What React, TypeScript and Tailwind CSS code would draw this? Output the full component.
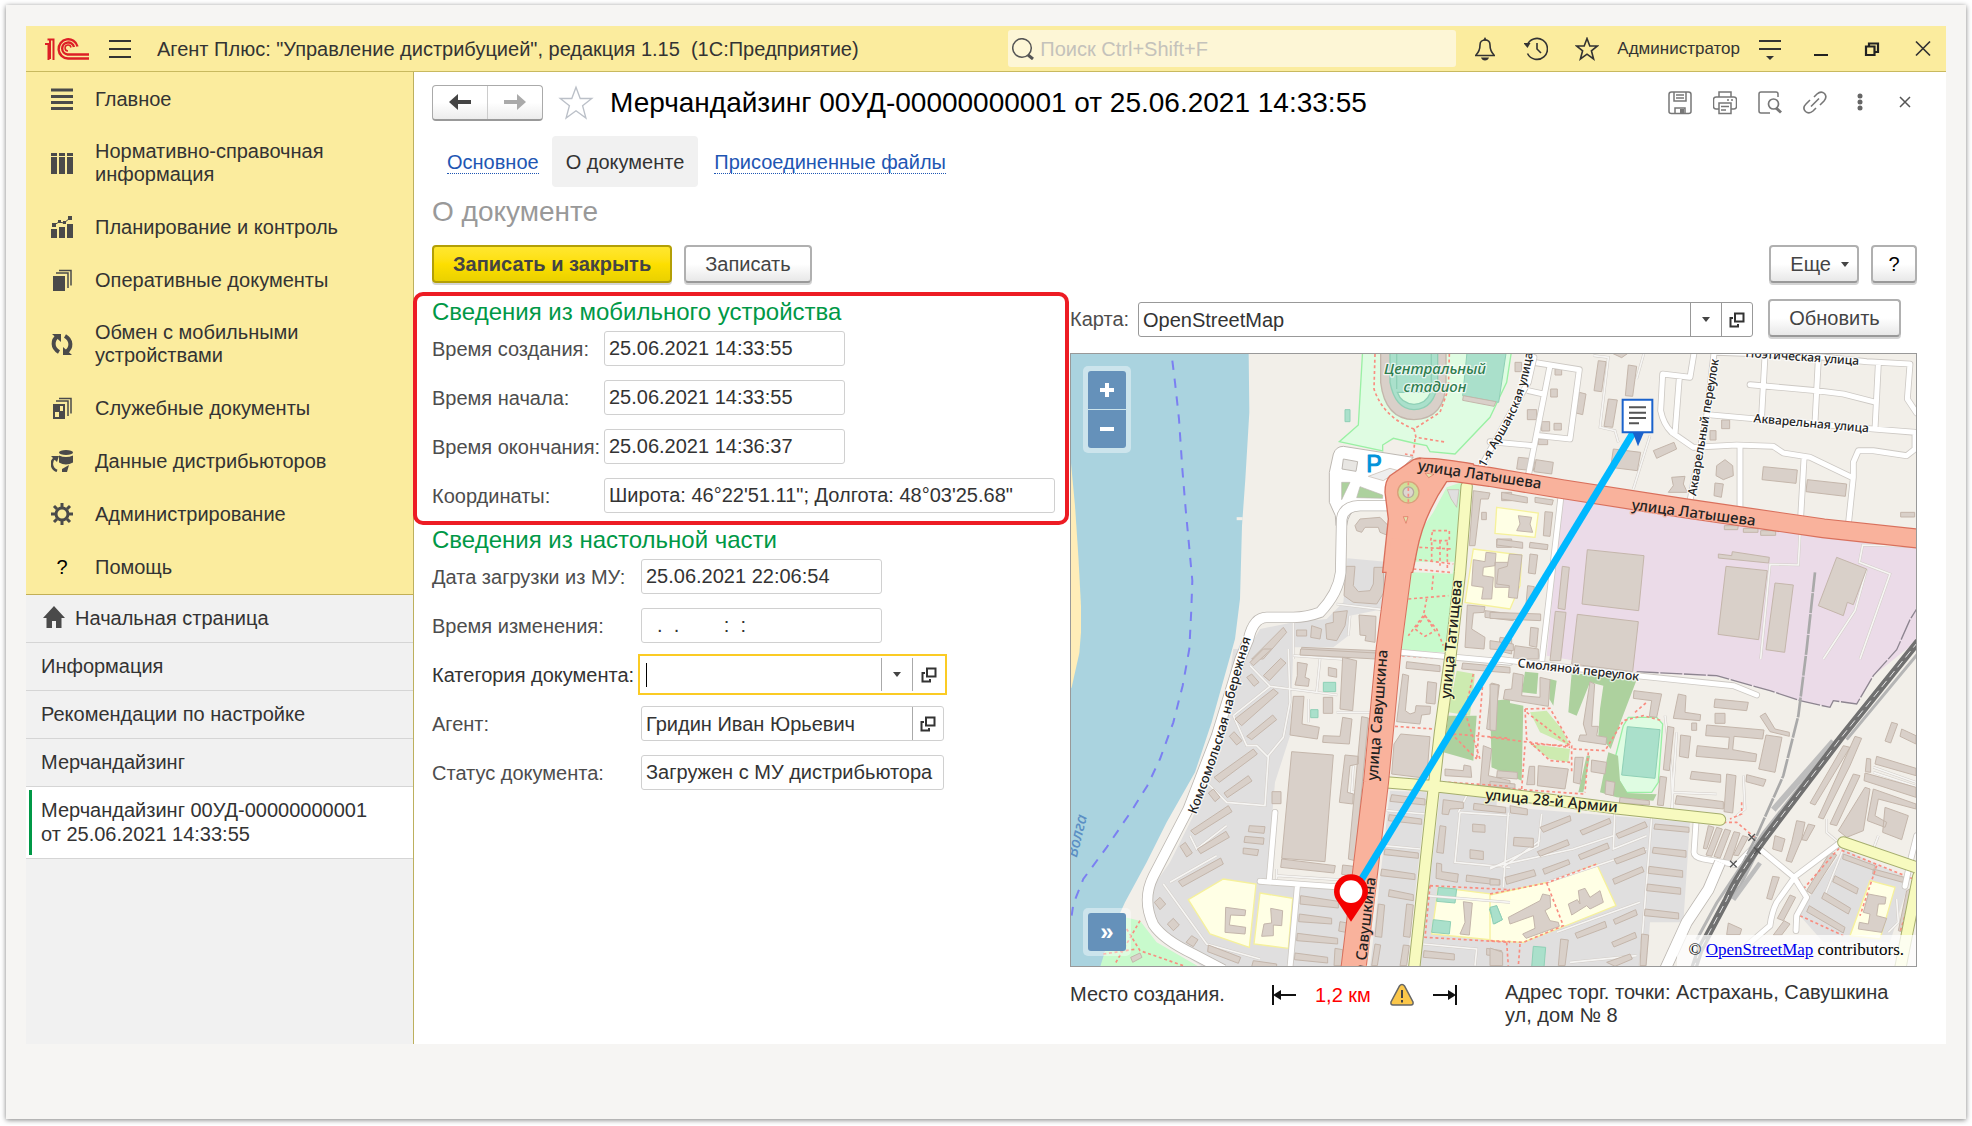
import React from 'react';

type IconProps = { children: React.ReactNode; className?: string; box?: string };

const Icon: React.FC<IconProps> = ({ children, className = 'w-6 h-6', box = '0 0 24 24' }) => (
  <svg viewBox={box} className={`shrink-0 ${className}`} fill="none" aria-hidden="true">
    {children}
  </svg>
);

const STAR = 'M12 1.5L14.8 9H22.5L16.4 13.8L18.6 22L12 17.2L5.4 22L7.6 13.8L1.5 9H9.2Z';

const SECTIONS = [
  {
    label: 'Главное',
    icon: <path d="M0 2h22M0 8.500h22M0 14.500h22M0 20.500h22" stroke="#4a4a4a" strokeWidth="3" />,
  },
  {
    label: 'Нормативно-справочная информация',
    icon: <path d="M0 1h6v3H0zM8 1h6v3H8zM16 1h6v3h-6zM0 5h6v17H0zM8 5h6v17H8zM16 5h6v17h-6z" fill="#4a4a4a" />,
  },
  {
    label: 'Планирование и контроль',
    icon: (
      <>
        <path d="M0 13h6v9H0zM8 11h6v11H8zM16 8h6v14h-6z" fill="#4a4a4a" />
        <path d="M3 9l5-3 5 1 6-5" stroke="#4a4a4a" />
        <path d="M1 7h4v4H1zM7 4h3v3H7zM12 5h3v3h-3zM17 0h4v4h-4z" fill="#4a4a4a" />
      </>
    ),
  },
  {
    label: 'Оперативные документы',
    icon: (
      <>
        <path d="M2 7h12v15H2z" fill="#4a4a4a" />
        <path d="M5 4h12v15M8 1.500h12v15" stroke="#4a4a4a" strokeWidth="1.500" />
      </>
    ),
  },
  {
    label: 'Обмен с мобильными устройствами',
    icon: (
      <>
        <path d="M7 3C1 7 1 15 8 19M14 3c7 4 7 12 1 16" stroke="#4a4a4a" strokeWidth="4" />
        <path d="M1 1h9v8zM21 22h-9v-8z" fill="#4a4a4a" />
      </>
    ),
  },
  {
    label: 'Служебные документы',
    icon: (
      <>
        <path d="M2 7h12v15H2z" fill="#4a4a4a" />
        <path d="M4 15h4v5H4zM9 9h3v5H9z" fill="#fbec9e" />
        <path d="M5 4h12v15M8 1.500h12v15" stroke="#4a4a4a" strokeWidth="1.500" />
      </>
    ),
  },
  {
    label: 'Данные дистрибьюторов',
    icon: (
      <>
        <ellipse cx="15" cy="2.500" rx="7" ry="2.500" fill="#4a4a4a" />
        <path d="M8 5.500q7 3 14 0v7q-7 4-14 0z" fill="#4a4a4a" />
        <path d="M6 21C-1 18 0 10 4 8" stroke="#4a4a4a" strokeWidth="2.500" />
        <path d="M0 6h8l-2 6zM11 22h5l2-7-7 4z" fill="#4a4a4a" />
      </>
    ),
  },
  {
    label: 'Администрирование',
    icon: (
      <>
        <circle cx="11" cy="11" r="6" stroke="#4a4a4a" strokeWidth="3" />
        <path
          d="M11 0v4M11 18v4M0 11h4M18 11h4M3 3l3 3M16 16l3 3M19 3l-3 3M6 16l-3 3"
          stroke="#4a4a4a"
          strokeWidth="3"
        />
      </>
    ),
  },
  { label: 'Помощь', icon: null },
];

const WINDOWS = ['Информация', 'Рекомендации по настройке', 'Мерчандайзинг'];

const DEVICE_FIELDS = [
  { id: 'created', label: 'Время создания:', value: '25.06.2021 14:33:55', width: 'w-[241px]' },
  { id: 'started', label: 'Время начала:', value: '25.06.2021 14:33:55', width: 'w-[241px]' },
  { id: 'finished', label: 'Время окончания:', value: '25.06.2021 14:36:37', width: 'w-[241px]' },
  { id: 'coords', label: 'Координаты:', value: 'Широта: 46°22\'51.11"; Долгота: 48°03\'25.68"', width: 'w-[451px]' },
];

const FIELD = 'h-[35px] rounded-[3px] border border-[#d0d0d0] bg-white px-1 text-[20px] text-[#333]';
const BUTTON =
  'h-[38px] rounded-[4px] border-2 border-[#b0b0b0] border-b-[#999] bg-linear-to-b from-white from-50% to-[#e8e8e8] text-[20px] text-[#444] shadow-[0_2px_0_#d4d4d4]';

const OpenIcon = () => (
  <Icon className="w-4 h-4" box="0 0 16 16">
    <path d="M6 1.500h8.500v8H6zM4 6H1.500v8.500H9V12" stroke="#333" strokeWidth="2" />
  </Icon>
);

const ArrowDown = () => (
  <Icon className="w-2 h-[5px]" box="0 0 8 5">
    <path d="M0 0h8L4 5z" fill="#444" />
  </Icon>
);

/* ---------- map ---------- */

// The drawing is split in four sheets, each with its own origin.
const NW = 'translate(-30 -42)';
const NE = 'translate(1260 -42)';
const SW = 'translate(-30 888)';
const SE = 'translate(1260 888)';

const HOUSES = [
  {
    at: NW,
    d: 'M885 560L900 540L960 535L985 560L980 588L960 580L955 565L915 565L905 580L890 575ZM858 682L885 682L880 740L895 758L930 755L940 735L942 685L970 685L972 760L950 795L880 790L852 770ZM575 960L670 865L680 880L610 960ZM710 873h30v18h-30ZM755 860L785 870L780 900L752 895ZM820 820L862 815L855 860L830 905L800 900L797 855L820 850ZM897 828L948 832L945 910L915 905L918 890L900 888ZM725 925L950 935V955L725 945ZM1240 455L1290 462L1285 480L1262 480L1245 620L1228 620ZM1265 520h14v22h-14ZM1325 460h30v25h-30ZM1240 662L1275 668L1278 640L1308 643L1305 680L1270 685L1268 710L1300 715L1295 780L1265 780L1270 745L1235 740ZM1310 600h45v25h-45ZM1305 670h50v75h-50ZM1222 798L1275 803L1272 820L1240 822L1235 870L1275 895L1272 930L1215 925ZM1275 815L1360 825V845L1275 835ZM1320 895L1355 900V945L1315 935ZM1210 170L1308 188L1302 202L1208 184Z',
  },
  {
    at: NE,
    d: 'M75 70h20v28h-20ZM195 90h20v18h-20ZM182 150h20v24h-20ZM112 212h28v30h-28ZM155 248h24v28h-24ZM192 253h22v20h-22ZM145 300h28v17h-28ZM268 160L288 165L278 227L258 222ZM325 65L348 68L335 158L312 155ZM415 78L440 82L428 172L406 170ZM355 180L382 183L368 265L342 262ZM365 42h50l-20 14ZM370 330L452 340L442 395L362 385ZM490 335L552 310L560 330L500 358ZM85 355L135 360L130 395L80 390ZM138 362L190 370L185 405L132 398ZM545 415L585 412L580 435L592 460L535 460L550 440ZM680 380L705 362L728 380L730 410L700 422L678 410ZM675 432L700 435L694 475L672 470ZM695 243h24v26h-24ZM660 275h18v28h-18ZM820 383L922 393L918 433L816 422ZM952 422L1070 435L1066 472L948 458ZM1232 520h42v14h-42ZM35 460L112 475V492L35 480ZM135 475L190 483L186 498L135 490ZM165 518L188 520L180 592L160 590ZM22 600L98 610V628L20 618ZM120 610L174 617L172 632L118 626ZM120 645L143 648L136 705L115 702ZM113 740L133 743L125 798L108 795ZM85 530L125 535L120 555L128 580L80 575L90 555ZM25 690L52 682L58 645L96 648L82 778L55 775L58 740L20 735ZM0 820L152 825V845L0 838ZM122 865L145 868L140 925L118 920ZM75 920L145 930V960H70ZM0 905L70 915V935L0 930ZM292 632L462 650L446 815L276 795ZM262 826L445 848L428 998L245 975ZM708 682L832 695L806 902L684 886ZM855 732L910 738L884 940L828 932ZM1040 655L1130 690L1090 797L1072 790L1060 830L985 800ZM217 682L238 685L225 812L204 808ZM196 817L228 820L212 965H180ZM685 645L725 650L727 638L838 655L836 672L685 657ZM703 560h42l-2 12h-40ZM760 568h44v12h-44ZM812 575h45v14h-45Z',
  },
  {
    at: SW,
    d: 'M570 40L610 0L635 0L580 50ZM610 80L662 28L678 42L628 95ZM560 85L575 75L597 100L582 112ZM525 210L640 120L655 132L545 230ZM560 262L638 198L650 212L575 272ZM508 262L522 248L546 275L530 288ZM462 385L580 300L592 315L478 400ZM492 432L565 380L576 396L502 446ZM445 432L460 420L480 445L465 458ZM392 545L505 470L516 488L405 558ZM412 600L498 547L508 565L422 614ZM360 592L376 580L397 612L380 624ZM355 697L482 627L490 645L367 713ZM568 530L615 533L612 553L565 548ZM555 562L612 567L610 586L552 580ZM550 597L596 602L592 620L549 614ZM636 428h27v36h-27ZM695 308L820 318L795 638L665 628ZM665 630L826 650L822 672L662 655ZM712 40L742 45L735 85L748 90L745 112L705 108L712 80ZM805 55l25 5v25l-25 -5ZM848 25L890 35L878 185L840 180ZM700 142L732 142L726 225L778 235L772 270L690 258ZM790 145h28v48h-28ZM848 205L876 210L868 285L788 280L790 260L840 262ZM722 0L950 12V30L720 18ZM855 318L895 322V345L870 350L862 430L880 435L878 465L838 460ZM905 203L925 207L885 635L865 630ZM848 648L882 652L878 680L845 676ZM1040 38L1140 50V68L1038 58ZM1028 75L1046 80L1036 185L1050 195L1065 190L1068 170L1112 172L1110 195L1085 198L1080 225L1010 218ZM1103 98L1130 102L1125 165L1098 162ZM1022 255L1110 263L1100 388L995 375L1002 285ZM1295 102L1318 108L1300 245L1280 240ZM1155 360L1210 365L1212 348L1232 352L1235 385L1155 380ZM1270 290L1295 300L1285 380L1350 395V420L1260 410ZM1208 42L1350 55V72L1205 60ZM995 437L1095 450V468L990 457ZM988 497L1085 510V526L985 515ZM975 600L1075 612V628L972 617ZM965 660L1065 675V692L962 680ZM988 722L1060 737V755L985 742ZM955 765L974 768L965 865L945 862ZM1040 765L1060 768L1050 865L1030 862ZM945 885L962 888L952 950H935ZM1030 888L1048 890L1040 950H1020ZM1150 452L1210 460V478L1170 480L1165 497L1146 495ZM1140 530L1158 533L1150 613L1130 610ZM1130 642L1145 645L1145 668L1195 675L1192 700L1128 688ZM1242 463L1337 475V492L1240 482ZM1238 525L1275 528V550L1238 548ZM1230 602L1270 607V632L1230 628ZM1220 678L1320 692V708L1218 697ZM722 740L835 757V777L720 765ZM718 795L815 808V825L716 818ZM712 853L833 868V885L710 875ZM705 912L803 925V942L703 932ZM840 818L862 822L858 850L836 846ZM825 898L848 902V950H822ZM497 775L557 783L555 800L512 798L508 828L557 835L555 855L495 850ZM632 778L668 785L665 830L640 828L640 860L605 862L612 825L635 822ZM283 760L300 745L317 765L300 782ZM322 825L340 808L358 828L340 845ZM378 880L395 860L414 872L400 893ZM445 888L542 925L535 943L443 908ZM580 935l70 10v8h-75ZM212 925L240 912L246 925L218 940ZM1210 758L1237 762L1228 858L1200 855L1215 820ZM1092 905L1183 915V933L1090 925ZM1280 898L1325 905V950H1305L1300 920L1280 918Z',
  },
  {
    at: SE,
    d: 'M70 72L100 78L95 140L150 145L150 85L180 92L175 172L40 150L45 122L65 120ZM0 105L25 108L18 245L0 243ZM300 98L314 105L305 232L325 232L320 260L350 265L348 287L265 275L270 258L290 258L280 225ZM432 125L515 135L500 205L478 202L485 155L430 148ZM565 135L588 140L585 190L632 197L630 215L550 208ZM605 222h15v22h-15ZM675 150L775 160L770 185L672 175ZM675 193h30v30h-30ZM810 202L826 192L855 240L898 250V262L840 248ZM650 228L822 243L818 270L732 262L728 302L800 315L797 338L618 322L622 290L715 300L718 265L647 260ZM572 258L602 262L595 327L568 322ZM828 258L876 265L855 370L806 360ZM605 367L692 377V400L600 390ZM770 377L828 392L820 412L768 398ZM710 375L738 380L728 492L702 488ZM560 440L700 458V480L555 465ZM533 232L552 236L538 365L520 362ZM510 382L530 385L520 470L502 468ZM145 350L235 360L225 420L142 410ZM305 333L350 340L345 375L303 368ZM255 325L280 325L270 405L250 400ZM118 352h16v55h-24ZM348 395L375 400L370 440L345 435ZM22 365L82 370V390L20 385ZM390 445L478 455V468L388 462ZM0 397L75 405V418L0 412ZM150 535L240 500L243 515L160 550ZM270 545L358 508L363 522L278 558ZM378 555L465 518L472 534L386 568ZM72 565L130 568V595L70 590ZM142 608L232 572L238 588L150 622ZM265 618L352 582L358 598L272 632ZM372 630L462 595L467 612L380 645ZM45 685L132 662L138 680L50 706ZM158 660L235 632L240 645L164 676ZM368 690L456 653L462 668L374 706ZM60 470L112 480V498L62 492ZM495 525L597 535V550L492 540ZM490 595L588 605V625L487 612ZM477 652L578 665V685L475 673ZM472 705L572 717V736L470 725ZM465 780L566 792V810L463 800ZM255 853L345 817L350 835L262 868ZM370 812L437 782L442 798L376 826ZM365 880L435 850L440 866L372 894ZM350 940L420 915L427 930L375 952ZM212 870L235 873L225 950H205ZM455 855L476 858L468 950H450ZM0 690L28 692V708H0ZM0 897L38 910V950H0ZM55 805L150 755L158 735L180 740L182 775L165 785L180 815L205 820L208 832L108 868L98 855L135 838L130 800L60 825ZM235 765L262 752L270 765L265 725L285 718L300 745L330 725L340 760L300 780L290 770L245 798ZM655 530L672 535L650 600L640 598ZM680 535L697 540L665 622L648 618ZM705 540L722 545L690 628L672 622ZM732 548L750 552L722 638L700 632ZM758 560L775 565L745 620L730 618ZM1095 262L1115 268L1080 350L1000 510L985 505ZM1060 290L1080 295L975 468L960 462ZM1090 375L1110 380L1040 530L1020 525ZM1125 415L1140 420L1120 545L1070 565L1045 545ZM1160 322L1278 358V380L1155 345ZM1125 372L1278 415V445L1122 395ZM1150 420L1278 465V480L1165 450L1155 500L1190 520L1185 535L1132 515ZM1185 475L1255 500L1235 572L1178 550ZM1205 220L1223 225L1202 282L1185 276ZM1235 240L1278 260V285L1230 262ZM920 515L945 520L935 570L905 640L888 635L905 580ZM955 525L975 530L950 575L935 572ZM855 560L885 570L875 608L848 600ZM1020 610L1040 618L965 735L950 725ZM1060 615L1155 650V665L1058 630ZM1150 660L1243 685L1238 700L1148 675ZM1035 680L1105 718L1100 735L1028 698ZM1003 730L1082 778L1075 795L995 748ZM958 770L1065 835L1060 852L950 788ZM900 738L917 745L880 815L862 808ZM848 682L868 685L845 752L830 748ZM882 815L900 825L875 858H850ZM715 822L755 840L750 857H710ZM1135 735L1188 745L1185 765L1165 765L1160 800L1190 808L1175 850L1105 840L1108 820L1135 825L1140 795L1120 790ZM1250 725L1278 710V760L1240 850L1225 845ZM1130 328l12 2v40l-16 -2Z',
  },
];

const LANES = [
  { at: NE, d: 'M115 410L180 80M130 70L268 92L240 300L148 290M0 308L130 320M115 155L160 165M612 42L600 115L518 105L512 215Q520 255 545 280L610 325L740 318L850 322L880 342L960 355L1085 415M568 115L555 285M672 42L650 230L600 485M750 320V508M942 360L932 535M1076 548L1090 415V370L1105 335L1150 335L1250 350L1275 330V280M680 40L960 50L1130 68L1260 75L1252 180L1280 222M825 50L815 230M985 60L975 250M1165 75L1155 270M780 137L980 155L1060 165L1150 188M665 228L800 240L1150 270L1275 280' },
  { at: NE, d: 'M212 480L155 970' },
  { at: NW, d: 'M1262 385L1350 225L1405 130L1422 55' },
  { at: SW, d: 'M1022 10L1350 40M645 490L628 690M600 697L850 715M712 712L690 955' },
  { at: SE, d: 'M20 30L440 80L730 110L800 138M618 520L612 610Q612 625 640 630L740 647L800 585M800 592L912 685L1045 585M912 685L950 745L920 800L918 845M910 690L860 760Q845 790 840 830L770 890M1280 560L1260 640L1245 712' },
];

const TRACKS = [
  { at: NE, d: 'M310 50L355 55L330 265L375 275L385 310M462 42L440 120M480 290L430 450M930 585L925 678L840 676L812 960M1278 622L1118 618L1108 670L1200 705L1110 960M1130 690L1095 815L1000 960' },
  { at: NW, d: 'M830 795L970 812M870 830L865 890M700 850V960M590 960L670 870' },
  { at: SW, d: 'M570 50L630 112L832 138M700 20L870 32M685 0L690 160L670 265L625 320L615 470L500 460L440 400M520 200L560 290L590 290L625 325M630 112L520 200M780 30L770 130M745 150V220M830 190L940 190M390 560L410 600L500 530M310 705L440 885L600 930M330 700L470 620M650 680L880 695M1200 490L1350 500M1200 490L1185 640L1350 655M1220 440L1195 490M1100 740L1350 760M1090 885L1250 900L1245 950M970 590L1080 600M980 485L1095 495M650 660V690M880 350L875 430L910 425' },
  { at: SE, d: 'M55 490L40 715M155 495L145 590L0 660M375 475L370 600L470 560M485 505L450 950M0 655L250 600L370 560M170 700L470 600M200 850L450 760M240 940L440 920M525 200L545 370L548 480M560 250L545 480M550 430L680 435M760 380L765 480L740 500M150 575L38 655M1010 510V550L1045 580M1060 600L1000 750M1165 560L1150 600M1150 355L1278 400M1150 370L1278 412M1195 850L1225 820L1220 750' },
];

const PATHS = [
  { at: NW, d: 'M945 45L942 150Q970 235 1062 270L1140 220L1165 150L1168 45M1062 270L1068 295L1160 310M1065 300L1060 350L1035 345M1118 575H1168V605H1112ZM1078 625L1178 630M1060 660L1180 675M1060 690L1170 700M1120 710L1115 760M1045 780L1165 770M1100 780L1090 830L1045 890M1095 830L1130 870L1150 920M1095 830L1065 870L1095 892L1125 875ZM1115 610V670M1140 605V680M1162 610V690M920 408L985 382' },
  { at: SW, d: 'M1025 20L1150 28M1005 232L1120 240M1165 400L1350 412M1240 75L1215 190L1260 330M1270 80L1250 330M1180 255L1350 268M1200 185L1180 260L1250 330M1110 710L1350 722M1110 710L1095 865L1350 880M200 840L240 905L370 950M240 815L165 945M130 915L230 900' },
  { at: SE, d: 'M0 265L240 295M105 180L180 178L245 290V370M105 180L110 270L180 335L240 340M110 190L240 290L120 285M95 420L105 290M250 300L345 305L400 215L460 200L515 215M295 310L285 430M435 190L470 160M0 415L280 435M700 520L740 520L800 570M800 590L880 660M755 460V495L720 510M0 735L170 702L320 645M170 702L220 830L100 880L0 875M90 885L85 950M50 880L55 950M925 690L940 720L1045 600L1270 690M930 800L1060 860M1160 650L1110 800M1278 690L1230 850' },
];

const EMBANKMENT =
  'M955 458H870Q820 460 815 498L812 658Q805 720 750 778Q710 793 670 793H590Q550 793 535 860L510 920L440 1148L355 1368L250 1570Q215 1640 250 1715Q280 1760 370 1803L460 1850';
const LATYSHEVA = 'M1050 343L1260 372L1475 408L1840 465L2260 526L2545 557';
const SAVUSHKINA = 'M1000 560L986 658L956 888L918 1288L850 1850';
const TATISCHEVA = 'M1190 400L1170 658L1142 905L1110 1138L1082 1388L1055 1638L1032 1850';
const ARMII = 'M950 1288L1100 1300L1310 1324L1640 1366L1950 1400';
const RAILWAY = 'M2545 865L2310 1158L2090 1448Q2000 1570 1970 1640L1890 1790L1870 1850';

const TownMap = () => (
  <svg viewBox="3 3 2535 1836" preserveAspectRatio="xMidYMid slice" className="block w-full h-full" role="img" aria-label="Карта">
    <defs>
      <path id="embankment" d="M378 1385Q455 1190 492 1038Q520 930 550 830" />
      <path id="arshanskaya" d="M1245 345L1325 205Q1370 120 1388 0" />
    </defs>
    <path d="M0 0H2545V1845H0Z" fill="#f2efe9" />
    <path d="M0 0H536L538 178L526 378L516 518L510 738L495 858L425 1108L375 1258L290 1408L230 1528L165 1648L110 1768L95 1845H0Z" fill="#aad3df" />
    <path d="M0 298L15 458L25 608L33 758V838L28 900L5 1003L0 1010Z" fill="#ffedb8" />
    <path d="M500 497h18" stroke="#f2efe9" strokeWidth="9" />
    <path
      d="M307 23L315 88L327 198L337 348L347 468L360 608L367 683L364 768L358 888L338 998L310 1108L270 1218L232 1298L185 1373L110 1483L40 1578L10 1653L5 1688"
      fill="none"
      stroke="#7b7ff2"
      strokeWidth="6"
      strokeDasharray="28 26"
    />

    {/* blocks */}
    <g fill="#e0dfdf">
      <path transform={NW} d="M540 970L600 870L700 850L800 840L850 790L862 658L978 668L970 810L870 830L865 890L820 925L700 925L695 970Z" />
      <path transform={SW} d="M520 0L700 0L690 260L645 400L620 690L885 718L860 955H430L300 870L260 740L330 640L400 500L480 300ZM990 425L1100 430L1040 955H930ZM1140 430L1310 445L1310 955H1080Z" />
      <path transform={SE} d="M0 470L600 520L580 820L480 820L470 955H0ZM1060 600L1260 690L1200 880H1000L930 800L960 740Z" />
    </g>
    <path d="M1477 430L2545 575V860L2410 968L2360 1053L2290 1043L2280 1063L2190 1043L2100 1013L1960 973L1700 956L1430 908Z" fill="#ebdbe8" />
    <path d="M1700 956L1940 968L2100 1013L2190 1043L2280 1063L2290 1043L2360 1053L2410 968L2480 890L2520 800L2545 760" fill="none" stroke="#8d8590" strokeWidth="4" strokeDasharray="66 5" />
    <g fill="#c8facc">
      <path transform={NW} d="M1120 520L1160 445L1205 430L1190 700L1155 940L1025 935L1065 600Z" />
      <path transform={SW} d="M1030 0L1150 0L1148 10L1030 0ZM195 805L240 815L290 880L420 955H120L150 860Z" />
    </g>
    <path transform={NW} d="M1060 668H1182L1178 704L1058 700Z" fill="#f2efe9" />
    <g fill="#dffce2" stroke="#9af0a4" strokeWidth="4">
      <path d="M878 -9L865 216L808 266L938 294V276L970 256L1030 270L1070 278L1080 296L1155 303L1260 193L1310 88L1325 -9Z" />
      <path transform={SE} d="M415 205H500L518 225L505 400L485 430H410L385 390L372 340L400 230Z" />
    </g>
    <g fill="#add19e">
      <path transform={SE} d="M0 150L100 170L95 395L5 355ZM105 68L145 72L140 135L95 130ZM245 72L440 92L395 210L362 300L350 285L325 260L330 180L340 110L300 100L260 200L235 190ZM180 90L200 95L190 170L178 150ZM355 310L384 320L390 395L412 432L500 436L490 455L380 445L330 430L340 380ZM290 320L300 320L280 430L265 430Z" />
      <path transform={SW} d="M1165 200L1250 200L1240 335L1150 310ZM1300 155L1350 150V365L1295 355Z" />
    </g>
    <g fill="#cdebb0">
      <path transform={SW} d="M1190 65L1245 75L1230 200L1165 190Z" />
      <path transform={SE} d="M120 190L170 185L215 240L240 290L150 250ZM120 285L240 300L235 340L180 330Z" />
    </g>
    <g fill="#ffffe5" stroke="#f6f19b" strokeWidth="4">
      <path transform={SW} d="M385 752L490 690L588 705L568 895L450 855ZM600 732L698 748L685 898L582 885ZM1135 715L1320 738V875L1115 855Z" />
      <path transform={SE} d="M0 738L170 700L320 645L378 770L240 825L100 880L0 875ZM1140 695L1215 715L1170 870L1080 860Z" />
      <path transform={NW} d="M1240 630L1385 648L1380 740L1350 810L1215 790ZM1310 505L1435 522L1425 595L1305 583Z" />
    </g>
    <g fill="#aae0cb" stroke="#8fd0b6" strokeWidth="3">
      <path transform={NW} d="M1222 30H1340L1316 190L1208 170ZM855 212h15v36h-15Z" />
      <path transform={SW} d="M790 100h37v28h-37ZM752 182h22v24h-22ZM1135 715L1190 720L1185 762L1130 757ZM1120 812L1172 818L1168 855L1115 850ZM1288 780L1310 770L1327 812L1303 825Z" />
      <path transform={SE} d="M412 233L510 242L495 388L395 378ZM130 892L167 895L162 955H125ZM0 775L20 770L37 812L10 825Z" />
    </g>
    <g transform={NW} strokeWidth="4">
      <path d="M962 30V130Q975 240 1062 242Q1155 240 1158 130V30Z" fill="#d9d0c9" stroke="#c4b6ab" />
      <path d="M990 30V130Q1005 210 1062 212Q1125 210 1133 130V30Z" fill="#aae0cb" stroke="#8fd0b6" />
      <path d="M1012 160H1112Q1098 195 1062 196Q1024 194 1012 160Z" fill="#dffce2" stroke="#8fd0b6" />
      <path d="M1010 30V150M1114 30V150" stroke="#8fd0b6" />
    </g>

    {TRACKS.map((t, i) => (
      <g key={i} transform={t.at} fill="none">
        <path d={t.d} stroke="#d2cdc8" strokeWidth="8" />
        <path d={t.d} stroke="#f6f5f3" strokeWidth="5" />
      </g>
    ))}
    {HOUSES.map((h, i) => (
      <path key={i} transform={h.at} d={h.d} fill="#d9d0c9" stroke="#c4b6ab" strokeWidth="3" />
    ))}
    {PATHS.map((p, i) => (
      <path key={i} transform={p.at} d={p.d} fill="none" stroke="#f98d80" strokeWidth="5" strokeDasharray="9 8" />
    ))}

    {/* streets */}
    {LANES.map((l, i) => (
      <g key={i} transform={l.at} fill="none" strokeLinejoin="round" strokeLinecap="round">
        <path d={l.d} stroke="#cdc9c4" strokeWidth="20" />
        <path d={l.d} stroke="#fff" strokeWidth="15" />
      </g>
    ))}
    <path transform={NW} d="M820 345Q828 322 850 322L1060 355L980 430L985 512H890Q865 520 860 560H828L826 530L808 490V400Z" fill="#fff" stroke="#bdb8b2" strokeWidth="3" />
    <g fill="none">
      <path d={EMBANKMENT} stroke="#bdb8b2" strokeWidth="34" />
      <path d={EMBANKMENT} stroke="#fff" strokeWidth="29" />
      <path d="M1950 1528L1915 1610L1850 1708L1785 1850" stroke="#bdb8b2" strokeWidth="36" />
      <path d="M1950 1528L1915 1610L1850 1708L1785 1850" stroke="#fff" strokeWidth="31" />
    </g>
    <g transform={NW}>
      <path d="M850 360L893 368L888 397L846 390Z" fill="#e8e6e3" stroke="#bdb8b2" strokeWidth="3" />
      <path d="M845 430H870L845 482ZM900 443L968 468V478L890 476Z" fill="#add19e" stroke="#bdb8b2" strokeWidth="2" />
      <path d="M1162 452H1197L1190 505Q1170 480 1162 452Z" fill="#e0dfdf" stroke="#c4b6ab" strokeWidth="2" />
      <path d="M925 412L990 388L1015 395L970 425Z" fill="#eee" stroke="#c4b6ab" strokeWidth="2" />
    </g>

    {/* railway */}
    <g fill="none">
      <path d="M2235 658L2210 888L2185 1088L2140 1268L2060 1448L1960 1650" stroke="#a9a9a9" strokeWidth="8" strokeDasharray="60 3" />
      <path d="M2300 1160L2080 1440L1940 1650L1880 1760M2545 900L2330 1160M2130 1400L2060 1500L2010 1600L1960 1660" stroke="#b5b5b5" strokeWidth="9" />
      <path d="M2290 1165L2110 1370" stroke="#bdbdbd" strokeWidth="18" />
      <path d="M2070 1530L1990 1640" stroke="#bdbdbd" strokeWidth="14" />
      <path d={RAILWAY} stroke="#707070" strokeWidth="22" />
      <path d={RAILWAY} stroke="#e6e6e6" strokeWidth="3" strokeDasharray="24 14" />
      <path d="M2035 1443l20 20m0-20l-20 20M2052 1483l20 20m0-20l-20 20M1980 1523l20 20m0-20l-20 20" stroke="#555" strokeWidth="4" />
    </g>

    {/* main streets */}
    <g fill="none" strokeLinecap="round">
      <path d={`${TATISCHEVA}${ARMII}M2320 1468L2545 1545M2545 1570L2510 1748L2490 1850`} stroke="#a5ad6d" strokeWidth="37" />
      <path d={`${TATISCHEVA}${ARMII}M2320 1468L2545 1545M2545 1570L2510 1748L2490 1850`} stroke="#f7fabf" strokeWidth="31" />
      <path d={LATYSHEVA} stroke="#d9705c" strokeWidth="60" />
      <path d={SAVUSHKINA} stroke="#d9705c" strokeWidth="78" />
    </g>
    <path transform={NW} d="M975 460Q975 425 990 410L1060 362Q1100 350 1240 375L1262 425L1160 428Q1090 530 1070 640L1058 700H968L985 540Z" fill="#f9b29c" stroke="#d9705c" strokeWidth="4" />
    <g fill="none">
      <path d={LATYSHEVA} stroke="#f9b29c" strokeWidth="53" />
      <path d={SAVUSHKINA} stroke="#f9b29c" strokeWidth="72" />
    </g>
    <g transform={NW}>
      <circle cx="1045" cy="460" r="32" fill="#cfe09a" stroke="#d9a07c" strokeWidth="4" />
      <circle cx="1045" cy="460" r="16" fill="#ddd6d0" stroke="#b5aaa0" strokeWidth="4" />
      <path d="M1045 430V490" stroke="#f98d80" strokeWidth="5" strokeDasharray="9 8" />
      <path d="M1095 402L1122 406L1106 416ZM1030 533h14l-6 20Z" fill="#e3e2ae" stroke="#d9705c" strokeWidth="2" />
    </g>

    {/* captions */}
    <g fontFamily="'Noto Sans', sans-serif" fontWeight="500" fill="#222" stroke="#fff" strokeOpacity="0.7" strokeWidth="8" paintOrder="stroke" strokeLinejoin="round">
      <g fontSize="45" stroke="#f9b29c">
        <text transform="translate(1042 352) rotate(8.5)">улица Латышева</text>
        <text transform="translate(1684 470) rotate(7.5)">улица Латышева</text>
        <text transform="translate(922 1284) rotate(-85.500)">улица Савушкина</text>
        <text transform="translate(917 1574) rotate(-83.500)" textAnchor="end">улица Савушкина</text>
      </g>
      <g fontSize="45" stroke="#f7fabf">
        <text transform="translate(1142 1038) rotate(-84.500)">улица Татищева</text>
        <text transform="translate(1245 1340) rotate(5.500)">улица 28-й Армии</text>
      </g>
      <g fontSize="39">
        <text><textPath href="#embankment">Комсомольская набережная</textPath></text>
        <text transform="translate(1342 942) rotate(6.500)" fontSize="37">Смоляной переулок</text>
      </g>
      <g fontSize="36">
        <text transform="translate(1878 430) rotate(-80.500)">Акварельный переулок</text>
        <text transform="translate(2050 208) rotate(5)">Акварельная улица</text>
        <text transform="translate(2026 12) rotate(4)">Поэтическая улица</text>
        <text><textPath href="#arshanskaya">1-я Аршанская улица</textPath></text>
      </g>
      <g fontSize="45" fontStyle="italic" fill="#2f7d4f" textAnchor="middle">
        <text x="1095" y="62">Центральный</text>
        <text x="1095" y="116">стадион</text>
      </g>
      <text transform="translate(20 1515) rotate(-76)" fontSize="47" fontStyle="italic" fill="#5b8fc4" stroke="#aad3df">Волга</text>
      <text x="889" y="358" fontSize="70" fill="#0092da" stroke="#0092da" strokeOpacity="1" strokeWidth="3" fontFamily="'Liberation Sans', sans-serif">P</text>
    </g>

    {/* visit route */}
    <path d="M1690 238L865 1595" stroke="#00b8ff" strokeWidth="21" />
    <path d="M843 1706L800 1642A51 51 0 1 1 886 1642Z" fill="#f40000" />
    <circle cx="843" cy="1616" r="34" fill="#fff" />
    <path d="M1688 238h34l-18 42Z" fill="#1a62cc" />
    <path d="M1658 140h89v98h-89Z" fill="#fff" stroke="#1a62cc" strokeWidth="6" />
    <path d="M1677 163h51M1677 179h51M1677 195h51M1677 211h30" stroke="#555" strokeWidth="6" />
  </svg>
);

const MAP_BUTTON = 'flex h-[38px] w-[38px] items-center justify-center bg-[#6591ba] text-[24px] font-bold text-white';

const MapPanel = () => (
  <div className="relative mt-4 h-[614px] overflow-hidden border border-[#999]">
    <TownMap />
    <div className="absolute left-3 top-3 flex flex-col gap-px rounded-[5px] bg-white/40 p-[5px]">
      <button className={`${MAP_BUTTON} rounded-t-[3px]`} aria-label="Приблизить">
        <Icon className="w-[14px] h-[14px]" box="0 0 14 14"><path d="M0 7h14M7 0v14" stroke="#fff" strokeWidth="4" /></Icon>
      </button>
      <button className={`${MAP_BUTTON} rounded-b-[3px]`} aria-label="Отдалить">
        <Icon className="w-[14px] h-[14px]" box="0 0 14 14"><path d="M0 7h14" stroke="#fff" strokeWidth="4" /></Icon>
      </button>
    </div>
    <div className="absolute bottom-[10px] left-3 rounded-[5px] bg-white/40 p-[5px]">
      <button className={`${MAP_BUTTON} rounded-[3px]`}>»</button>
    </div>
    <p className="absolute bottom-0 right-0 bg-white/75 px-3 pb-[2px] font-['Liberation_Serif',serif] text-[17px] leading-[29px] text-black">
      © <a href="#osm" className="text-[#00e] underline">OpenStreetMap</a> contributors.
    </p>
  </div>
);

/* ---------- window parts ---------- */

const TitleBar = () => (
  <header className="flex h-[46px] items-center border-b border-[#c8b95f] bg-[#fbec9e] pl-[19px] pr-[11px] text-[20px] text-[#333]">
    <Icon className="w-11 h-6" box="0 0 44 24">
      <path d="M0 7h3.500V23M2.500 2.500H8.500V23M5 2v20" stroke="#dd1f26" strokeWidth="2" />
      <path d="M32.500 9.500A9.600 9.600 0 1 0 23 21.500H44M29 10A6 6 0 1 0 22.500 17.500H44" stroke="#dd1f26" strokeWidth="2.400" />
      <path d="M26 10.500a3 3 0 1 0-3 3.500" stroke="#dd1f26" strokeWidth="1.500" />
    </Icon>
    <button className="ml-5 mr-[26px]" aria-label="Меню">
      <Icon className="w-[22px] h-6" box="0 0 22 24"><path d="M0 4h22M0 12h22M0 20h22" stroke="#333" strokeWidth="2" /></Icon>
    </button>
    <h1 className="flex-1 whitespace-pre">Агент Плюс: "Управление дистрибуцией", редакция 1.15  (1С:Предприятие)</h1>
    <label className="flex h-[37px] w-[448px] items-center rounded-[3px] bg-[#fdf6d6] pl-1">
      <Icon className="w-[22px] h-[22px]" box="0 0 22 22">
        <circle cx="10" cy="10" r="9.300" stroke="#555" strokeWidth="1.500" />
        <path d="M16 17l5 4" stroke="#555" strokeWidth="3" />
      </Icon>
      <input className="ml-[6px] flex-1 bg-transparent outline-none placeholder:text-[#c4c2bb]" placeholder="Поиск Ctrl+Shift+F" />
    </label>
    <div className="flex items-center gap-[27px] pl-[17px]">
      <button aria-label="Оповещения">
        <Icon>
          <path d="M2 18.500h20M3 18q4-4 4-10c0-3 2-5 5-5s5 2 5 5q0 6 4 10" stroke="#333" strokeWidth="1.600" />
          <path d="M10 3.500L12 0l2 3.500zM8 20.500h8q-1 3-4 3t-4-3z" fill="#333" />
        </Icon>
      </button>
      <button aria-label="История">
        <Icon>
          <path d="M3 8.500A10.500 10.500 0 1 1 3.500 16.500M13 6v6l4 4" stroke="#333" strokeWidth="1.600" />
          <path d="M-.5 6h7l-3 5z" fill="#333" />
        </Icon>
      </button>
      <button aria-label="Избранное"><Icon><path d={STAR} stroke="#333" strokeWidth="1.600" /></Icon></button>
      <span className="-mx-[9px] text-[17px]">Администратор</span>
      <button aria-label="Настройки">
        <Icon>
          <path d="M1 4h22M1 12h22" stroke="#333" strokeWidth="1.800" />
          <path d="M8 19h8l-4 4z" fill="#333" />
        </Icon>
      </button>
      <button aria-label="Свернуть"><Icon><path d="M5 18h14" stroke="#222" strokeWidth="2" /></Icon></button>
      <button aria-label="Развернуть">
        <Icon><path d="M6 9.500h8.500v8.500H6zM9 9V6.500h9V15h-3" stroke="#222" strokeWidth="2.200" /></Icon>
      </button>
      <button aria-label="Закрыть"><Icon><path d="M5 4.500l14 14M19 4.500l-14 14" stroke="#333" strokeWidth="1.700" /></Icon></button>
    </div>
  </header>
);

const Sidebar = () => (
  <aside className="w-[388px] shrink-0 border-r border-[#bdb05e] bg-[#f1f1f1] text-[20px] text-[#333]">
    <nav className="border-b border-[#c2af56] bg-[#fbec9e] pb-px leading-[23px]">
      {SECTIONS.map((s) => (
        <a key={s.label} href="#section" className="flex min-h-[53px] items-center gap-[22px] pb-[14px] pl-[25px] pt-[15px]">
          {s.icon ? (
            <Icon className="w-[22px] h-[22px]" box="0 0 22 22">{s.icon}</Icon>
          ) : (
            <span className="w-[22px] text-center text-black">?</span>
          )}
          <span className="w-[270px]">{s.label}</span>
        </a>
      ))}
    </nav>
    <nav className="leading-6">
      <a href="#home" className="flex items-center gap-[10px] border-b border-[#d5d5d5] pb-3 pl-[17px] pt-[11px]">
        <Icon className="w-[22px] h-6" box="0 0 22 24"><path d="M11 0L0 12h3.500v10H9v-7h4v7h5.500V12H22z" fill="#4a4a4a" /></Icon>
        Начальная страница
      </a>
      {WINDOWS.map((w) => (
        <a key={w} href="#window" className="block border-b border-[#d5d5d5] pb-3 pl-[15px] pt-[11px]">{w}</a>
      ))}
      <a href="#window" className="block border-b border-[#d5d5d5] bg-white py-[3px] pl-[3px]">
        <span className="block border-l-[3px] border-[#009846] pb-[9px] pl-[9px] pt-2">
          Мерчандайзинг 00УД-00000000001
          <br />
          от 25.06.2021 14:33:55
        </span>
      </a>
    </nav>
  </aside>
);

const FormHeader = () => (
  <div className="pl-[18px] pr-[29px]">
    <div className="flex h-[64px] items-center pb-[6px] pt-[3px]">
      <div className="flex h-9 rounded-[4px] border border-[#aaa] border-b-2 border-b-[#999] bg-linear-to-b from-white from-50% to-[#ececec]">
        <button className="flex w-[55px] items-center justify-center border-r border-[#ccc]" aria-label="Назад">
          <Icon className="w-[22px] h-4" box="0 0 22 16"><path d="M0 8l9-8v6h13v4H9v6z" fill="#444" /></Icon>
        </button>
        <button className="flex w-[54px] items-center justify-center" aria-label="Вперед">
          <Icon className="w-[22px] h-4" box="0 0 22 16"><path d="M22 8l-9-8v6H0v4h13v6z" fill="#aaa" /></Icon>
        </button>
      </div>
      <button className="ml-[15px] mr-4" aria-label="В избранное">
        <Icon className="w-9 h-9"><path d={STAR} stroke="#bbc0c8" strokeWidth="0.900" /></Icon>
      </button>
      <h2 className="flex-1 text-[28px] text-black">Мерчандайзинг 00УД-00000000001 от 25.06.2021 14:33:55</h2>
      <div className="flex items-center gap-[21px]">
        <button aria-label="Сохранить">
          <Icon>
            <path d="M3.500 1h17Q23 1 23 3.500v17q0 2-2.500 2h-17Q1 22.500 1 20.500v-17Q1 1 3.500 1zM6 1v9h12V1M8 4h8M8 7h8M7 22v-5h10v5" stroke="#777" strokeWidth="1.500" />
            <path d="M12 18h4v4h-4z" fill="#777" />
          </Icon>
        </button>
        <button aria-label="Печать">
          <Icon>
            <path d="M6 6V1h12v5M6 18H3q-2.500 0-2.500-2.500v-7Q.5 6 3 6h18q2.500 0 2.500 2.500v7Q23.500 18 21 18h-3M6 12h12v10.500H6zM8 15.500h8M8 19h5M14 9h2M18 9h2" stroke="#777" strokeWidth="1.500" />
          </Icon>
        </button>
        <button aria-label="Просмотр">
          <Icon>
            <path d="M12 22H3Q1 22 1 20V3q0-2 2-2h15q2 0 2 2v3" stroke="#777" strokeWidth="1.500" />
            <circle cx="15.500" cy="13" r="5" stroke="#777" strokeWidth="1.700" />
            <path d="M18 17l5 4.500" stroke="#777" strokeWidth="3" />
          </Icon>
        </button>
        <button aria-label="Ссылка">
          <Icon>
            <path d="M11 6l3-3q4-3.500 7.500-.5 3 3.500-.5 7.500l-4 4M7 9l-4 4q-4 4-.5 7.500Q6 23.500 10 20l3-3M8 15.500l8-8" stroke="#777" strokeWidth="1.600" />
          </Icon>
        </button>
        <button aria-label="Дополнительно">
          <Icon>
            <circle cx="12" cy="5" r="2.500" fill="#666" />
            <circle cx="12" cy="11" r="2.500" fill="#666" />
            <circle cx="12" cy="17" r="2.500" fill="#666" />
          </Icon>
        </button>
        <button aria-label="Закрыть форму"><Icon><path d="M7 6l10 10M17 6L7 16" stroke="#555" strokeWidth="1.500" /></Icon></button>
      </div>
    </div>
    <nav className="flex h-[51px] items-center text-[20px] text-[#1e56b3]">
      <a href="#main" className="pl-[15px] pr-[13px]"><span className="border-b border-dotted border-[#1e56b3]">Основное</span></a>
      <span className="flex h-full items-center rounded-[4px] bg-[#f1f1f1] px-[14px] text-[#333]">О документе</span>
      <a href="#files" className="px-4"><span className="border-b border-dotted border-[#1e56b3]">Присоединенные файлы</span></a>
    </nav>
    <h3 className="pt-2 text-[28px] leading-[34px] text-[#999]">О документе</h3>
    <div className="mt-4 flex gap-3">
      <button className="h-[38px] rounded-[4px] border-2 border-[#b39f06] bg-linear-to-b from-[#ffe72e] via-[#fddf00] to-[#ead100] px-[19px] text-[20px] font-bold text-[#444] shadow-[0_2px_0_#d4d4d4]">
        Записать и закрыть
      </button>
      <button className={`${BUTTON} px-[19px]`}>Записать</button>
      <button className={`${BUTTON} ml-auto flex w-[90px] items-center justify-end gap-[10px] pr-2`}>Еще <ArrowDown /></button>
      <button className={`${BUTTON} w-[46px] text-black`}>?</button>
    </div>
  </div>
);

const DocumentInfo = () => (
  <div className="w-[656px] shrink-0 text-[20px]">
    <section className="-ml-px mr-px rounded-[10px] border-4 border-[#ed1c24] pb-2 pl-[15px] pt-px">
      <h4 className="mb-1 text-[24px] leading-[30px] text-[#009846]">Сведения из мобильного устройства</h4>
      <div className="flex flex-col gap-[14px]">
        {DEVICE_FIELDS.map((f) => (
          <div key={f.id} className="flex items-center">
            <label htmlFor={f.id} className="w-[172px] text-[#4d4d4d]">{f.label}</label>
            <input id={f.id} readOnly defaultValue={f.value} className={`${FIELD} ${f.width}`} />
          </div>
        ))}
      </div>
    </section>
    <section className="pl-[18px]">
      <h4 className="mb-1 text-[24px] leading-[30px] text-[#009846]">Сведения из настольной части</h4>
      <div className="flex flex-col gap-[14px] text-[#4d4d4d]">
        <div className="flex items-center">
          <label htmlFor="loaded" className="w-[209px]">Дата загрузки из МУ:</label>
          <input id="loaded" readOnly defaultValue="25.06.2021 22:06:54" className={`${FIELD} w-[241px]`} />
        </div>
        <div className="flex items-center">
          <label htmlFor="changed" className="w-[209px]">Время изменения:</label>
          <input id="changed" readOnly defaultValue="  .  .        :  :" className={`${FIELD} w-[241px] whitespace-pre`} />
        </div>
        <div className="-my-[3px] flex items-center">
          <label htmlFor="category" className="w-[206px] text-[#333]">Категория документа:</label>
          <div className="flex h-[41px] w-[309px] items-center border-2 border-[#fbcb24] bg-white py-[2px] pl-[6px]">
            <span className="h-6 w-px bg-black" />
            <input id="category" className="h-full min-w-0 flex-1 outline-none" />
            <button className="flex h-full w-[31px] items-center justify-center border-l border-[#aaa]" aria-label="Выбрать"><ArrowDown /></button>
            <button className="flex h-full w-[33px] items-center justify-center border-l border-[#aaa]" aria-label="Открыть категорию"><OpenIcon /></button>
          </div>
        </div>
        <div className="flex items-center">
          <label htmlFor="agent" className="w-[209px]">Агент:</label>
          <div className={`${FIELD} flex w-[303px] items-center pr-0`}>
            <input id="agent" readOnly defaultValue="Гридин Иван Юрьевич" className="min-w-0 flex-1 outline-none" />
            <button className="flex h-full w-[31px] items-center justify-center border-l border-[#aaa]" aria-label="Открыть агента"><OpenIcon /></button>
          </div>
        </div>
        <div className="flex items-center">
          <label htmlFor="status" className="w-[209px]">Статус документа:</label>
          <input id="status" readOnly defaultValue="Загружен с МУ дистрибьютора" className={`${FIELD} w-[303px]`} />
        </div>
      </div>
    </section>
  </div>
);

const Distance = () => (
  <div className="flex items-center gap-[19px] text-[#f00]">
    <Icon className="w-6 h-5" box="0 0 24 20"><path d="M1 0v20M6 10h18" stroke="#111" strokeWidth="2" /><path d="M1 10l8-5v10z" fill="#111" /></Icon>
    1,2 км
    <Icon>
      <path d="M12 1.500Q13.500 1.500 14.500 3L23 19q.5 3-2 3H3q-2.500 0-2-3L9.500 3Q10.500 1.500 12 1.500z" fill="#fbc74a" stroke="#666" strokeWidth="1.500" />
      <path d="M12 7v8M12 17v2.500" stroke="#444" strokeWidth="2" />
    </Icon>
    <Icon className="w-6 h-5" box="0 0 24 20"><path d="M23 0v20M18 10H0" stroke="#111" strokeWidth="2" /><path d="M23 10l-8-5v10z" fill="#111" /></Icon>
  </div>
);

const MapColumn = () => (
  <div className="min-w-0 flex-1 pr-[29px] text-[20px] text-[#333]">
    <div className="flex items-end pt-[7px]">
      <label htmlFor="provider" className="w-[68px] shrink-0 leading-[35px] text-[#4d4d4d]">Карта:</label>
      <div className="flex h-[35px] flex-1 rounded-[3px] border border-[#999] bg-white">
        <select id="provider" className="min-w-0 flex-1 appearance-none pl-1 outline-none">
          <option>OpenStreetMap</option>
        </select>
        <button className="flex w-[31px] items-center justify-center border-l border-[#999]" aria-label="Список карт"><ArrowDown /></button>
        <button className="flex w-[31px] items-center justify-center border-l border-[#999]" aria-label="Открыть карту"><OpenIcon /></button>
      </div>
      <button className={`${BUTTON} ml-[15px] mr-4 w-[133px]`}>Обновить</button>
    </div>
    <MapPanel />
    <div className="flex items-start pb-[17px] pt-[14px] leading-[23px]">
      <p className="w-[202px] shrink-0 pt-[2px]">Место создания.</p>
      <div className="w-[233px] shrink-0 pt-[2px]"><Distance /></div>
      <p className="flex-1">Адрес торг. точки: Астрахань, Савушкина ул, дом № 8</p>
    </div>
  </div>
);

const App: React.FC = () => {
  return (
    <div className="bg-white px-[6px] pb-[6px] pt-[5px] font-['Liberation_Sans',Arial,sans-serif]">
      <div className="bg-[#f6f5f3] px-5 pb-[75px] pt-[21px] shadow-[0_1px_5px_rgba(0,0,0,0.5)]">
        <TitleBar />
        <div className="flex bg-white">
          <Sidebar />
          <main className="min-w-0 flex-1">
            <FormHeader />
            <div className="flex pt-[9px]">
              <DocumentInfo />
              <MapColumn />
            </div>
          </main>
        </div>
      </div>
    </div>
  );
};

export default App;
